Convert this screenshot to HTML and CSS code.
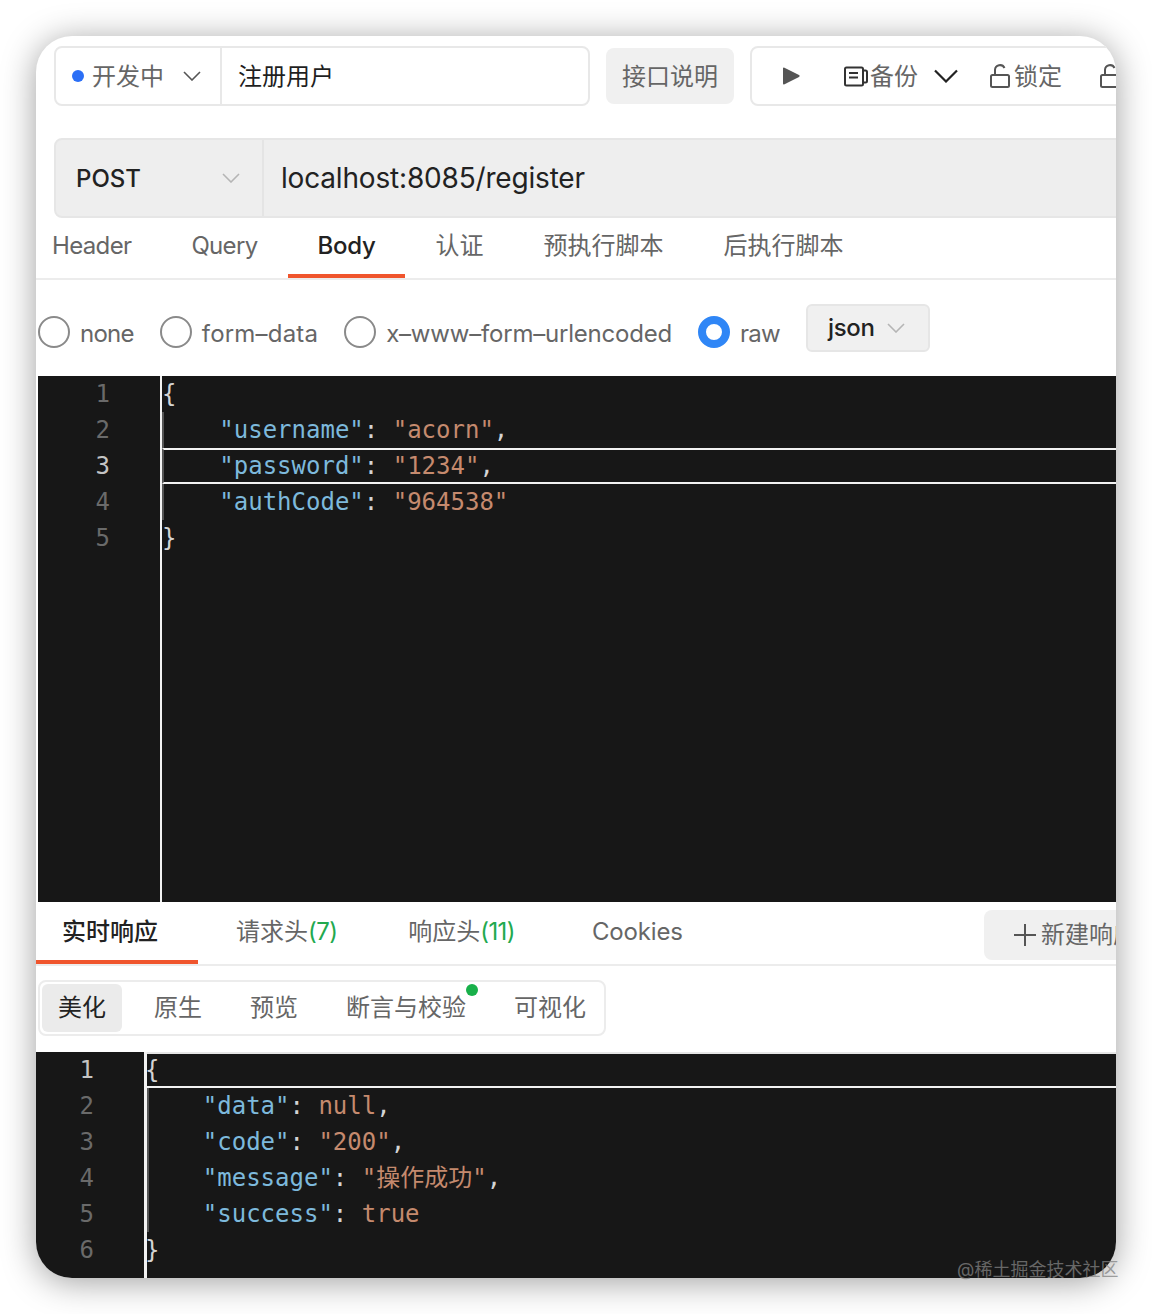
FILE: index.html
```html
<!DOCTYPE html>
<html lang="zh">
<head>
<meta charset="utf-8">
<title>注册用户</title>
<link rel="stylesheet" href="styles.css">
</head>
<body>
<main class="window">
  <div class="toolbar">
    <div class="name-group">
      <div class="status">
        <span class="dot"></span><span class="status-text">开发中</span>
        <svg class="chev-status" viewBox="0 0 18 10"><path d="M1 1l8 8 8-8"/></svg>
      </div>
      <div class="name">注册用户</div>
    </div>
    <div class="doc-btn">接口说明</div>
    <div class="actions">
      <svg class="play" viewBox="0 0 18 18"><path d="M1 1.500a1 1 0 0 1 1.500-.8l14.500 7.400a1 1 0 0 1 0 1.800L2.500 17.300A1 1 0 0 1 1 16.500z"/></svg>
      <svg class="ico-backup" viewBox="0 0 24 20"><path d="M2.500 1h15a1.500 1.500 0 0 1 1.500 1.500v15a1.500 1.500 0 0 1-1.500 1.500h-15A1.500 1.500 0 0 1 1 17.500v-15A1.500 1.500 0 0 1 2.500 1z"/><path d="M5 6.500h9M5 11h9M19 4h2.500A1.500 1.500 0 0 1 23 5.500v9a1.500 1.500 0 0 1-1.500 1.500H19"/></svg>
      <span class="act-text">备份</span>
      <svg class="chev-act" viewBox="0 0 24 14"><path d="M1 1.500l11 11 11-11"/></svg>
      <svg class="ico-lock" viewBox="0 0 20 24"><path d="M2.500 11h15a1.500 1.500 0 0 1 1.500 1.500v9a1.500 1.500 0 0 1-1.500 1.500h-15A1.500 1.500 0 0 1 1 21.500v-9A1.500 1.500 0 0 1 2.500 11z"/><path d="M5 11V6a5 5 0 0 1 9.500-2"/></svg>
      <span class="act-text lock-text">锁定</span>
      <svg class="ico-lock ico-next" viewBox="0 0 20 24"><path d="M2.500 11h15a1.500 1.500 0 0 1 1.500 1.500v9a1.500 1.500 0 0 1-1.500 1.500h-15A1.500 1.500 0 0 1 1 21.500v-9A1.500 1.500 0 0 1 2.500 11z"/><path d="M5 11V6a5 5 0 0 1 9.500-2"/></svg>
    </div>
  </div>

  <div class="url-bar">
    <div class="method"><span>POST</span>
      <svg class="chev-light" viewBox="0 0 18 10"><path d="M1 1l8 8 8-8"/></svg>
    </div>
    <div class="url">localhost:8085/register</div>
  </div>

  <nav class="tabs">
    <span class="tab first latin">Header</span>
    <span class="tab latin">Query</span>
    <span class="tab active">Body</span>
    <span class="tab">认证</span>
    <span class="tab">预执行脚本</span>
    <span class="tab">后执行脚本</span>
  </nav>

  <div class="body-types">
    <label class="radio"><span class="circle"></span><span class="radio-text tight">none</span></label>
    <label class="radio"><span class="circle"></span><span class="radio-text wide">form–data</span></label>
    <label class="radio"><span class="circle"></span><span class="radio-text slight">x–www–form–urlencoded</span></label>
    <label class="radio"><span class="circle on"></span><span class="radio-text tight">raw</span></label>
    <div class="json-select"><span>json</span>
      <svg class="chev-light" viewBox="0 0 18 10"><path d="M1 1l8 8 8-8"/></svg>
    </div>
  </div>

  <section class="editor request">
    <div class="gutter">
      <div>1</div><div>2</div><div class="cur">3</div><div>4</div><div>5</div>
    </div>
    <div class="code">
      <div class="line"><span class="p">{</span></div>
      <div class="line guide"><span class="k">"username"</span><span class="p">: </span><span class="s">"acorn"</span><span class="p">,</span></div>
      <div class="line guide boxed"><span class="k">"password"</span><span class="p">: </span><span class="s">"1234"</span><span class="p">,</span></div>
      <div class="line guide"><span class="k">"authCode"</span><span class="p">: </span><span class="s">"964538"</span></div>
      <div class="line"><span class="p">}</span></div>
    </div>
  </section>

  <nav class="resp-tabs">
    <span class="rtab active">实时响应</span>
    <span class="rtab r2">请求头<em>(7)</em></span>
    <span class="rtab r3">响应头<em>(11)</em></span>
    <span class="rtab r4">Cookies</span>
    <div class="new-btn">
      <svg class="plus" viewBox="0 0 22 22"><path d="M0 11h22M11 0v22"/></svg>
      <span class="new-text">新建响应</span>
    </div>
  </nav>

  <div class="view-wrap">
    <div class="views">
      <span class="view active">美化</span>
      <span class="view">原生</span>
      <span class="view">预览</span>
      <span class="view flagged">断言与校验<i class="green"></i></span>
      <span class="view">可视化</span>
    </div>
  </div>

  <section class="editor response">
    <div class="gutter">
      <div class="cur">1</div><div>2</div><div>3</div><div>4</div><div>5</div><div>6</div>
    </div>
    <div class="code">
      <div class="line top-box brace"><span class="p">{</span></div>
      <div class="line guide"><span class="k">"data"</span><span class="p">: </span><span class="s">null</span><span class="p">,</span></div>
      <div class="line guide"><span class="k">"code"</span><span class="p">: </span><span class="s">"200"</span><span class="p">,</span></div>
      <div class="line guide"><span class="k">"message"</span><span class="p">: </span><span class="s">"操作成功"</span><span class="p">,</span></div>
      <div class="line guide"><span class="k">"success"</span><span class="p">: </span><span class="s">true</span></div>
      <div class="line brace"><span class="p">}</span></div>
    </div>
  </section>
</main>
<div class="watermark">@稀土掘金技术社区</div>
</body>
</html>
```
FILE: styles.css
```css
* { box-sizing: border-box; }
html, body { margin: 0; padding: 0; background: #fff; }
body {
  position: relative;
  width: 1152px;
  height: 1314px;
  padding: 36px;
  overflow: hidden;
  font-family: Inter, "Noto Sans CJK SC", sans-serif;
  font-size: 24px;
  color: #666;
}
svg { display: block; flex: none; fill: none; }

.window {
  width: 1080px;
  height: 1242px;
  background: #fff;
  border-radius: 36px;
  overflow: hidden;
  box-shadow: 0 4px 34px rgba(0, 0, 0, .38);
  padding-top: 10px;
}

.toolbar { display: flex; align-items: center; height: 60px; padding-left: 18px; }
.name-group {
  display: flex; flex: none; width: 536px; height: 60px;
  border: 2px solid #e8e8e8; border-radius: 8px;
}
.status {
  display: flex; align-items: center; width: 166px; height: 100%;
  padding-left: 16px; border-right: 2px solid #e8e8e8;
}
.dot { width: 12px; height: 12px; border-radius: 50%; background: #2b6ff6; margin-right: 8px; }
.status-text { width: 72px; line-height: 1; padding-top: 2px; }
.chev-status { width: 18px; height: 10px; margin-left: 19px; stroke: #555; stroke-width: 1.6; }
.name { padding-left: 16px; line-height: 58px; color: #1f1f1f; }
.doc-btn {
  flex: none; width: 128px; height: 56px; margin-left: 16px;
  background: #f0f0f0; border-radius: 8px;
  text-align: center; line-height: 57px;
}
.actions {
  flex: none; display: flex; align-items: center; width: 500px; height: 60px;
  margin-left: 16px; padding-left: 30px;
  border: 2px solid #e8e8e8; border-radius: 8px;
}
.play { width: 18px; height: 18px; fill: #555; }
.ico-backup { width: 24px; height: 21px; margin-left: 44px; stroke: #333; stroke-width: 2; }
.act-text { margin-left: 2px; line-height: 1; padding-top: 2px; }
.chev-act { width: 24px; height: 14px; margin-left: 16px; stroke: #222; stroke-width: 2.2; }
.ico-lock { width: 20px; height: 24px; margin-left: 32px; stroke: #555; stroke-width: 2; }
.lock-text { margin-left: 4px; }
.ico-next { margin-left: 38px; }

.url-bar {
  display: flex; width: 1100px; height: 80px; margin: 32px 0 0 18px;
  background: #eee; border: 2px solid #e6e6e6; border-radius: 8px;
  color: #222;
}
.method {
  display: flex; align-items: center; justify-content: space-between;
  width: 208px; padding: 0 22px 0 20px;
  border-right: 2px solid #e4e4e4; font-weight: 500;
}
.chev-light { width: 18px; height: 10px; stroke: #b5b5b5; stroke-width: 1.6; }
.url { padding-left: 17px; font-size: 28px; line-height: 76px; letter-spacing: -.18px; }

.tabs {
  display: flex; height: 62px; padding-left: 16px;
  border-bottom: 2px solid #ececec; color: #666;
}
.tab { padding: 0 30px; height: 60px; line-height: 56px; }
.tab.first { padding-left: 0; }
.tab.latin { letter-spacing: -.65px; }
.tab.active { color: #222; font-weight: 500; border-bottom: 4px solid #f0552d; height: 60px; letter-spacing: -.3px; }

.body-types { display: flex; align-items: center; height: 96px; padding: 8px 0 0 2px; gap: 26px; }
.radio { display: flex; align-items: center; gap: 10px; line-height: 32px; }
.radio-text { padding-top: 3px; }
.tight { letter-spacing: -.75px; }
.wide { letter-spacing: .2px; }
.slight { letter-spacing: -.2px; }
.circle { width: 32px; height: 32px; border-radius: 50%; border: 2px solid #8a8a8a; }
.circle.on { border: 8px solid #2f86f6; }
.json-select {
  display: flex; align-items: center; gap: 12px;
  width: 124px; height: 48px; margin-top: -8px; padding: 0 0 0 20px;
  background: #f0f0f0; border: 2px solid #e6e6e6; border-radius: 6px;
  color: #222; font-weight: 500; line-height: 44px; letter-spacing: -.3px;
}

.editor {
  display: flex; background: #171717;
  font-family: "DejaVu Sans Mono", "Noto Sans CJK SC", monospace;
  font-size: 24px; line-height: 36px; color: #d4d4d4;
}
.request { height: 526px; margin-left: 2px; }
.response { height: 226px; }
.gutter { flex: none; text-align: right; color: #6a6a6a; padding-right: 50px; }
.gutter .cur { color: #c4c4c4; }
.request .gutter { width: 122px; }
.response .gutter { width: 108px; }
.code { flex: 1; min-width: 0; }
.request .code { border-left: 2px solid #f2f2f2; }
.response .code { border-left: 3px solid #f2f2f2; }
.line { height: 36px; white-space: pre; }
.guide { border-left: 2px solid #555; }
.request .guide { padding-left: calc(4ch - 2.5px); }
.response .guide { padding-left: calc(4ch - 4px); }
.brace { text-indent: -2px; }
.boxed { border-top: 2px solid #f2f2f2; border-bottom: 2px solid #f2f2f2; line-height: 32px; }
.top-box { border-top: 2px solid #e6e6e6; border-bottom: 2px solid #f2f2f2; line-height: 32px; }
.k { color: #7db9dc; }
.s { color: #c58a6e; }
.p { color: #d4d4d4; }

.resp-tabs {
  display: flex; height: 64px; border-bottom: 2px solid #ececec; position: relative;
}
.rtab { height: 62px; line-height: 60px; }
.rtab em { font-style: normal; color: #22a94f; letter-spacing: -.6px; }
.rtab.active {
  width: 162px; padding-left: 26px; color: #222; font-weight: 500;
  border-bottom: 4px solid #f0552d;
}
.r2 { margin-left: 38px; }
.r3 { margin-left: 71px; }
.r4 { margin-left: 77px; letter-spacing: -.15px; }
.new-btn {
  position: absolute; left: 948px; top: 8px;
  display: flex; align-items: center; gap: 5px;
  width: 170px; height: 50px; padding-left: 30px;
  background: #f0f0f0; border-radius: 8px; white-space: nowrap;
}
.new-text { line-height: 50px; height: 50px; }
.plus { width: 22px; height: 22px; stroke: #555; stroke-width: 2; }

.view-wrap { height: 86px; padding: 14px 0 0 2px; }
.views {
  display: inline-flex; gap: 16px; height: 56px; padding: 2px;
  border: 2px solid #ececec; border-radius: 8px;
}
.view { position: relative; padding: 0 16px; line-height: 48px; height: 48px; border-radius: 6px; }
.view.active { background: #ebebeb; color: #222; }
.green {
  position: absolute; right: 4px; top: 0; width: 12px; height: 12px;
  border-radius: 50%; background: #18b04a;
}

.watermark {
  position: absolute; left: 957px; top: 1257px;
  font-size: 18px; line-height: 26px; color: rgba(130, 130, 130, .75); white-space: nowrap;
}
```
